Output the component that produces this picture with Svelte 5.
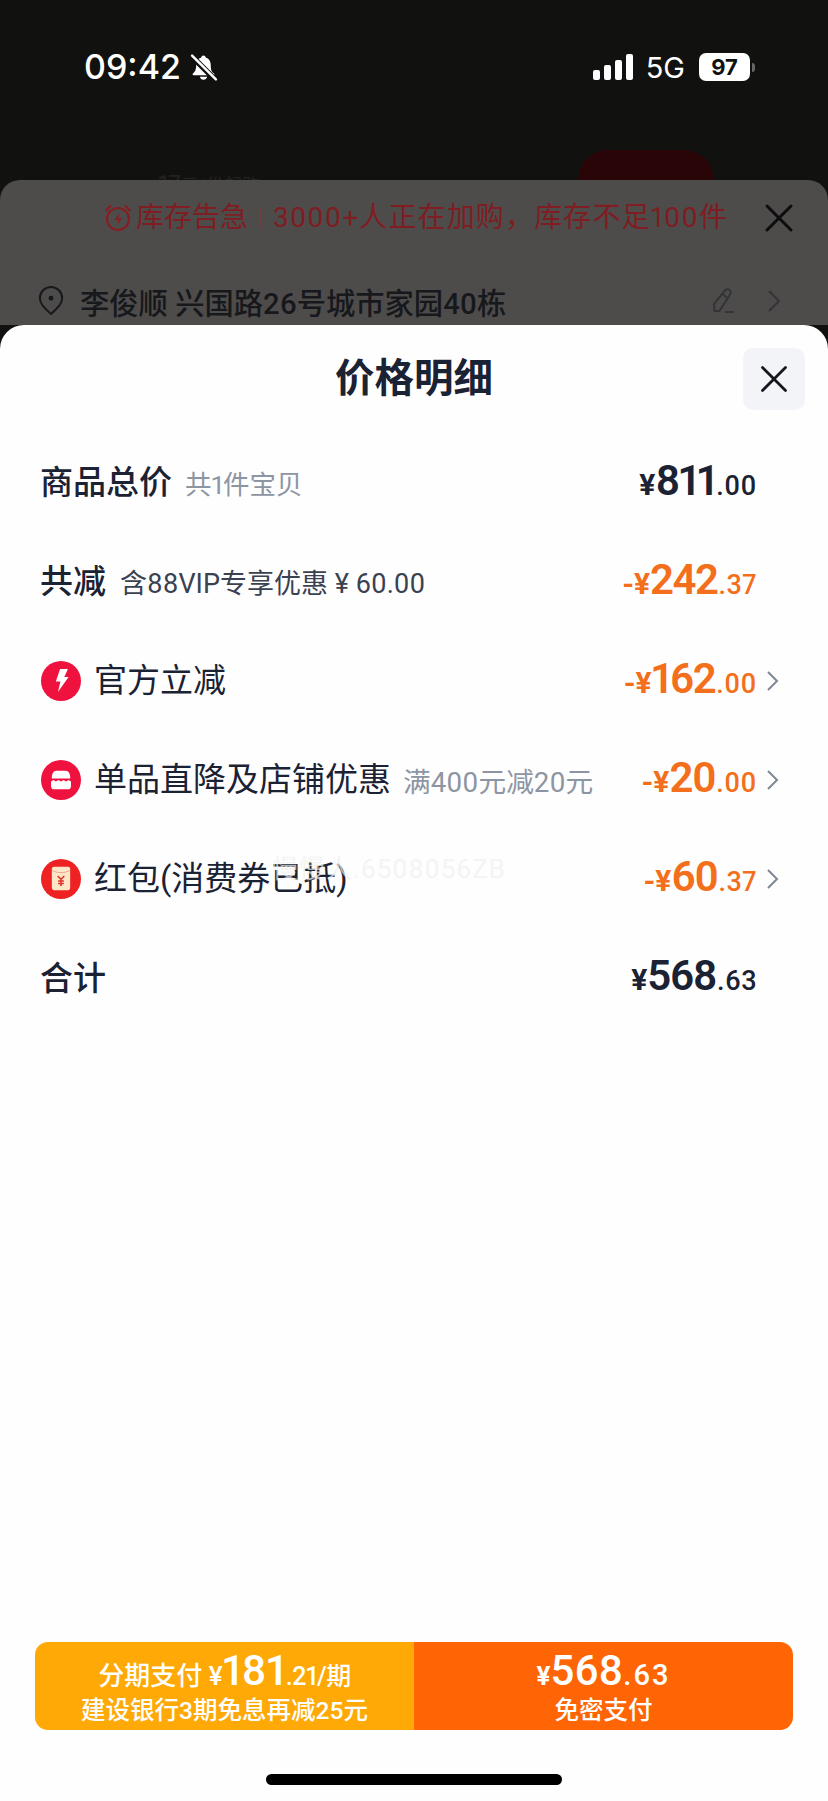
<script>
    const rows = [
        {label: "官方立减", icon: "bolt", amount: "162", cents: "00"},
        {label: "单品直降及店铺优惠", icon: "shop", note: "满400元减20元", amount: "20", cents: "00"},
        {label: "红包(消费券已抵)", icon: "packet", amount: "60", cents: "37"}
    ];
</script>

<div class="page">
    <div class="top">
        <div class="status">
            <div class="clock">
                <span class="time">09:42</span>
                <svg class="bell" width="29" height="29" viewBox="0 0 28 28" aria-hidden="true">
                    <path d="M14 2.500c-1.200 0-2 .9-2.100 1.900C8.600 5.400 7 8.200 7 11.500c0 4-1 6.500-3.200 8.400-.7.6-.3 1.600.6 1.600h19.200c.9 0 1.300-1 .6-1.600C21.500 18 21 15.500 21 11.500c0-3.300-1.600-6.100-4.900-7.100C16 3.400 15.200 2.500 14 2.500z" fill="#fff"/>
                    <path d="M10.500 23a3.600 3.600 0 0 0 7 0z" fill="#fff"/>
                    <path d="M2 2.500 26 26.500" stroke="#111" stroke-width="5.500"/>
                    <path d="M3 2.500 26 25.500" stroke="#fff" stroke-width="2.400" stroke-linecap="round"/>
                </svg>
            </div>
            <div class="sys">
                <div class="bars"><i class="b1"></i><i class="b2"></i><i class="b3"></i><i class="b4"></i></div>
                <span class="net">5G</span>
                <span class="batt">97</span>
                <i class="nub"></i>
            </div>
        </div>
        <div class="peek">
            <span class="peek-num">17<small>元/份起购</small></span>
            <span class="peek-btn"></span>
        </div>
    </div>

    <div class="under">
        <div class="alert">
            <svg width="30" height="30" viewBox="0 0 30 30" fill="none" stroke="#861e23" stroke-width="2.200" aria-hidden="true">
                <circle cx="15" cy="16" r="11"/>
                <path d="M3 7.500 7.500 3M27 7.500 22.500 3" stroke-linecap="round"/>
                <path d="M16.500 9.500 11.500 17h4l-1.500 5.500 5-7.500h-4z" fill="#861e23" stroke="none"/>
            </svg>
            <span class="alert-text">库存告急</span>
            <i class="sep"></i>
            <span class="alert-text wide">3000+人正在加购，库存不足100件</span>
            <svg class="alert-x" width="30" height="30" viewBox="0 0 30 30" aria-hidden="true">
                <path d="M3 3 27 27M27 3 3 27" stroke="#0c0c0e" stroke-width="3" stroke-linecap="round"/>
            </svg>
        </div>
        <div class="addr">
            <svg width="26" height="32" viewBox="0 0 28 32" fill="none" stroke="#18191d" stroke-width="2.200" aria-hidden="true">
                <path d="M14 30C8 24.500 2 19.500 2 13a12 12 0 0 1 24 0c0 6.500-6 11.500-12 17z" stroke-linejoin="round"/>
                <circle cx="14" cy="13" r="2.600" fill="#18191d" stroke="none"/>
            </svg>
            <span class="addr-text">李俊顺 兴国路26号城市家园40栋</span>
            <svg class="pen" width="28" height="30" viewBox="0 0 28 30" fill="none" stroke="#333438" stroke-width="2" aria-hidden="true">
                <path d="M4 18 15 4.500a3.200 3.200 0 0 1 5 4L9.500 25H4.500z" stroke-linejoin="round"/>
                <path d="M12.500 8 18 12.500M15 26h9"/>
            </svg>
            <svg width="14" height="24" viewBox="0 0 14 24" fill="none" stroke="#333438" stroke-width="2" aria-hidden="true">
                <path d="M2 2 12 12 2 22"/>
            </svg>
        </div>
    </div>

    <div class="sheet">
        <header>
            <h1>价格明细</h1>
            <button type="button" class="close" aria-label="关闭">
                <svg width="28" height="28" viewBox="0 0 28 28" aria-hidden="true">
                    <path d="M2.500 2.500 25.500 25.500M25.500 2.500 2.500 25.500" stroke="#14171f" stroke-width="2.800" stroke-linecap="round"/>
                </svg>
            </button>
        </header>

        <div class="row">
            <span class="label strong">商品总价</span>
            <span class="note note-first">共1件宝贝</span>
            <span class="price"><em>¥</em><b>811</b><s>.00</s></span>
        </div>
        <div class="row">
            <span class="label strong">共减</span>
            <span class="vip">含88VIP专享优惠 ¥ 60.00</span>
            <span class="price off"><em>-¥</em><b>242</b><s>.37</s></span>
        </div>

        {#each rows as row}
            <div class="row">
                <span class="badge" class:packet={row.icon === "packet"}>
                    {#if row.icon === "bolt"}
                        <svg width="17" height="25" viewBox="0 0 24 28" preserveAspectRatio="none" aria-hidden="true">
                            <path d="M10 1h11l-5 9h6L7 27l3.500-12H4z" fill="#fff"/>
                        </svg>
                    {:else if row.icon === "shop"}
                        <svg width="22" height="20" viewBox="0 0 28 26" aria-hidden="true">
                            <path d="M8 1h12c4 0 6 4 6 10H2C2 5 4 1 8 1z" fill="#fff"/>
                            <path d="M1 15l3.200-2 3.200 2 3.300-2 3.300 2 3.300-2 3.300 2 3.200-2 3.200 2v6a4 4 0 0 1-4 4H5a4 4 0 0 1-4-4z" fill="#fff"/>
                        </svg>
                    {:else}
                        <svg width="20" height="25" viewBox="0 0 24 30" aria-hidden="true">
                            <rect x="1" y="1" width="22" height="28" rx="2.500" fill="#fde7c8"/>
                            <path d="M1 5c6 4 16 4 22 0" fill="none" stroke="#e8a98a" stroke-width="1.200"/>
                            <path d="M8 12l4 4 4-4M12 16v8M8.500 18h7M8.500 21h7" fill="none" stroke="#e2362d" stroke-width="2"/>
                        </svg>
                    {/if}
                </span>
                <span class="label">{row.label}</span>
                {#if row.note}<span class="note">{row.note}</span>{/if}
                <span class="price off"><em>-¥</em><b>{row.amount}</b><s>.{row.cents}</s></span>
                <svg class="chev" width="13" height="22" viewBox="0 0 13 22" fill="none" stroke="#7f8794" stroke-width="2" aria-hidden="true">
                    <path d="M2 2 11 11 2 20"/>
                </svg>
            </div>
        {/each}

        <div class="row total">
            <span class="label strong">合计</span>
            <span class="price"><em>¥</em><b>568</b><s>.63</s></span>
        </div>

        <span class="mark">慢慢人.6508056ZB</span>

        <footer>
            <div class="pay">
                <div class="pay-side split">
                    <div class="pay-main"><span>分期支付 ¥</span><b>181</b><span class="tail">.21/期</span></div>
                    <div class="pay-sub">建设银行3期免息再减25元</div>
                </div>
                <div class="pay-side direct">
                    <div class="pay-main"><span class="yen">¥</span><b>568</b><span class="tail wide">.63</span></div>
                    <div class="pay-sub">免密支付</div>
                </div>
            </div>
            <div class="home"></div>
        </footer>
    </div>
</div>

<style>
    :global(body) {
        margin: 0;
        background: #111;
    }

    .page {
        width: 828px;
        height: 1801px;
        display: flex;
        flex-direction: column;
        overflow: hidden;
        background: #111110;
        font-family: Roboto, "Noto Sans CJK SC", sans-serif;
        font-variant-numeric: proportional-nums;
    }

    .top {
        height: 180px;
        overflow: hidden;
    }

    .status {
        display: flex;
        justify-content: space-between;
        align-items: center;
        height: 134px;
        padding: 0 0 0 84px;
    }

    .clock {
        display: flex;
        align-items: center;
        gap: 8px;
        color: #fff;
    }

    .time {
        font-family: Inter, sans-serif;
        font-size: 34px;
        font-weight: 500;
        line-height: 40px;
    }

    .sys {
        display: flex;
        align-items: center;
        color: #fff;
        padding-right: 73px;
    }

    .bars {
        display: flex;
        align-items: flex-end;
        gap: 4px;
        height: 26px;
    }

    .bars i {
        width: 7px;
        border-radius: 2px;
        background: #fff;
    }

    .b1 { height: 10px; }
    .b2 { height: 15px; }
    .b3 { height: 20px; }
    .b4 { height: 26px; }

    .net {
        margin-left: 13px;
        font-family: Inter, sans-serif;
        font-size: 29px;
        font-weight: 400;
    }

    .batt {
        margin-left: 14px;
        width: 51px;
        height: 28px;
        border-radius: 7px;
        background: #fff;
        color: #111;
        font-family: Inter, sans-serif;
        font-size: 22px;
        font-weight: 700;
        line-height: 28px;
        text-align: center;
    }

    .nub {
        width: 3px;
        height: 9px;
        margin-left: 2px;
        border-radius: 0 3px 3px 0;
        background: #666;
    }

    .peek {
        position: relative;
        height: 46px;
    }

    .peek-num {
        position: absolute;
        left: 158px;
        top: 36px;
        color: #222;
        font-size: 24px;
    }

    .peek-num small {
        font-size: 18px;
    }

    .peek-btn {
        position: absolute;
        left: 578px;
        top: 16px;
        width: 136px;
        height: 60px;
        border-radius: 30px;
        background: #2a0508;
    }

    .under {
        height: 145px;
        box-sizing: border-box;
        border-radius: 20px 20px 0 0;
        background: #4d4c4b;
    }

    .alert {
        display: flex;
        align-items: center;
        height: 76px;
        padding-left: 103px;
        color: #7f1d22;
    }

    .alert-text {
        font-size: 28px;
        line-height: 76px;
        margin-left: 3px;
    }

    .alert-text.wide {
        margin-left: 0;
        letter-spacing: 1.150px;
    }

    .sep {
        width: 1px;
        height: 22px;
        margin: 0 12px;
        background: #70403f;
    }

    .alert-x {
        margin-left: auto;
        margin-right: 34px;
    }

    .addr {
        display: flex;
        align-items: center;
        height: 46px;
        margin-top: 22px;
        padding: 0 47px 0 38px;
        color: #17181c;
    }

    .addr-text {
        margin-left: 16px;
        font-size: 29.300px;
        font-weight: 500;
    }

    .pen {
        margin-left: auto;
        margin-right: 29px;
    }

    .sheet {
        position: relative;
        flex: 1;
        display: flex;
        flex-direction: column;
        border-radius: 24px 24px 0 0;
        background: #fefefe;
        color: #1a2233;
    }

    header {
        position: relative;
        height: 108px;
        flex: none;
    }

    h1 {
        margin: 0;
        padding-top: 24px;
        font-size: 39.500px;
        font-weight: 600;
        line-height: 60px;
        text-align: center;
    }

    .close {
        position: absolute;
        top: 23px;
        right: 23px;
        width: 62px;
        height: 62px;
        padding: 0;
        display: flex;
        align-items: center;
        justify-content: center;
        border: none;
        border-radius: 10px;
        background: #f2f4f7;
    }

    .row {
        display: flex;
        align-items: center;
        height: 99px;
        flex: none;
        padding: 0 71px 0 40px;
    }

    .row.total .label {
        margin-top: 2px;
    }

    .label {
        font-size: 33px;
        line-height: 44px;
    }

    .label.strong {
        font-weight: 500;
    }

    .note {
        margin-left: 12px;
        color: #8d95a3;
        font-size: 27.700px;
    }

    .note-first {
        margin-left: 13px;
        font-size: 26.500px;
    }

    .vip {
        margin-left: 14px;
        color: #3a4150;
        font-size: 27px;
    }

    .price {
        margin-left: auto;
        margin-bottom: 4px;
        display: flex;
        align-items: baseline;
        font-weight: 700;
    }

    .price em {
        font-size: 30px;
        font-style: normal;
    }

    .price b {
        font-size: 42px;
        font-weight: 600;
        line-height: 44px;
        letter-spacing: -1.500px;
    }

    .price s {
        margin-left: 1px;
        font-size: 27px;
        font-weight: 500;
        letter-spacing: 0.500px;
        text-decoration: none;
    }

    .price.off {
        color: #f36f1c;
    }

    .badge {
        width: 40px;
        height: 40px;
        margin-left: 1px;
        margin-right: 13px;
        display: flex;
        align-items: center;
        justify-content: center;
        border-radius: 50%;
        background: #f0123e;
    }

    .badge.packet {
        background: #ee2222;
    }

    .row:has(.chev) {
        padding-right: 49px;
    }

    .chev {
        margin-left: 9px;
    }

    .mark {
        position: absolute;
        left: 272px;
        top: 523px;
        color: #f0f0f0;
        font-size: 26px;
        letter-spacing: 1px;
        opacity: 0.7;
    }

    footer {
        margin-top: auto;
        padding: 0 35px 16px;
    }

    .pay {
        display: flex;
        height: 88px;
        border-radius: 13px;
        overflow: hidden;
        color: #fff;
    }

    .pay-side {
        flex: 1;
        display: flex;
        flex-direction: column;
        align-items: center;
        justify-content: center;
    }

    .split {
        background: #ffa907;
    }

    .direct {
        background: #ff6405;
    }

    .pay-main {
        display: flex;
        align-items: baseline;
        height: 50px;
        font-size: 26px;
        font-weight: 500;
        line-height: 50px;
    }

    .pay-main b {
        font-size: 42px;
        font-weight: 500;
    }

    .tail {
        font-size: 25px;
        letter-spacing: -0.500px;
    }

    .tail.wide {
        font-size: 29px;
        letter-spacing: 2px;
    }

    .yen {
        font-weight: 700;
    }

    .pay-sub {
        height: 30px;
        font-size: 24.500px;
        font-weight: 500;
        line-height: 30px;
    }

    .home {
        width: 296px;
        height: 11px;
        margin: 44px auto 0;
        border-radius: 6px;
        background: #000;
    }
</style>
